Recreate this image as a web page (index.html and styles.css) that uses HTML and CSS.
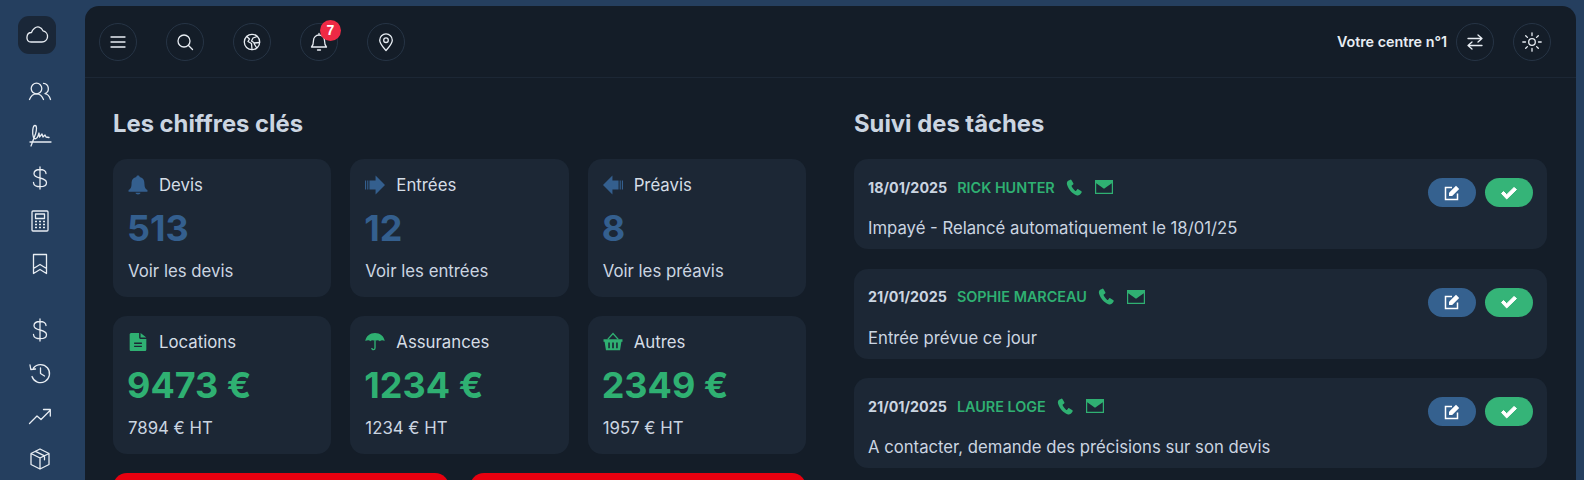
FILE: index.html
```html
<!DOCTYPE html>
<html lang="fr">
<head>
    <meta charset="UTF-8">
    <title>Tableau de bord</title>
    <link rel="stylesheet" href="styles.css">
</head>
<body>
    <!-- Sidebar -->
    <aside class="sidebar">
        <div class="logo">
            <svg class="ico" width="28" height="28" viewBox="0 0 28 28"><path d="M8 21h11a5.600 5.600 0 0 0 1-11.100C18.500 5.500 14 5 11.500 7.300 9.500 9 9 10 8.500 11.500 3 11.500 2 21 8 21Z"/></svg>
        </div>
        <nav class="side-group">
            <svg class="ico" width="26" height="26" viewBox="0 0 26 26"><circle cx="9.500" cy="9.500" r="5.300"/><path d="M2.500 20.500c1.300-3.400 3.800-5.600 7-5.600s5.700 2.200 7 5.600M16.500 4.400a5.300 5.300 0 0 1 1.500 10.200c2.800.4 4.500 2.500 5.500 5.900"/></svg>
            <svg class="ico" width="26" height="26" viewBox="0 0 26 26"><path d="M4 24 8.500 12C9.800 8 10 3.500 8 3.500 5.500 3.500 5 12 6.500 15.500c1 2 3.500 1.500 4.500-1.500l1-3 .5 4 2.500-3 1 3 2-2 1 2 3 .5M3 20h21"/></svg>
            <svg class="ico" width="26" height="26" viewBox="0 0 26 26"><path d="M13 2v22M19 8.500c0-2.500-2.500-4-6-4s-6 1.700-6 4.200 2.500 3.500 6 4.300 6.500 2 6.500 4.700-3 4-6.500 4-6.500-1.600-6.500-4.200"/></svg>
            <svg class="ico" width="26" height="26" viewBox="0 0 26 26"><rect x="5" y="3" width="16" height="20" rx="1"/><rect x="8.500" y="6" width="9" height="4.500"/><path class="dots" d="M8 13.500h2M12 13.500h2M16 13.500h2M8 16.500h2M12 16.500h2M16 16.500h2M8 19.500h2M12 19.500h2M16 19.500h2"/></svg>
            <svg class="ico" width="26" height="26" viewBox="0 0 26 26"><path d="M6.500 3.500h13v19L13 18.500l-6.500 4ZM6.500 17.500l6.500-4 6.500 4"/></svg>
        </nav>
        <nav class="side-group">
            <svg class="ico" width="26" height="26" viewBox="0 0 26 26"><path d="M13 2v22M19 8.500c0-2.500-2.500-4-6-4s-6 1.700-6 4.200 2.500 3.500 6 4.300 6.500 2 6.500 4.700-3 4-6.500 4-6.500-1.600-6.500-4.200"/></svg>
            <svg class="ico" width="26" height="26" viewBox="0 0 26 26"><path d="M6.500 8A9 9 0 1 1 5 16.500M3 5l.8 4.500 4.700-.5M13.500 8v5.500l4 2.500"/></svg>
            <svg class="ico" width="26" height="26" viewBox="0 0 26 26"><path d="M2.500 20.500 10 13l4 3.500 9-9M16.500 6.500h6.800v6.500"/></svg>
            <svg class="ico" width="26" height="26" viewBox="0 0 26 26"><path d="M13 3l9 4.500v11L13 23l-9-4.500v-11ZM4 7.500 13 12l9-4.500M13 12v11M8.500 5.300l9 4.500v4"/></svg>
        </nav>
    </aside>

    <div class="panel">
        <!-- Top bar -->
        <header class="topbar">
            <div class="top-left">
                <button class="round">
                    <svg class="ico" width="20" height="20" viewBox="0 0 20 20"><path d="M3 5h14M3 10h14M3 15h14"/></svg>
                </button>
                <button class="round">
                    <svg class="ico" width="20" height="20" viewBox="0 0 20 20"><circle cx="9" cy="9" r="6"/><path d="m13.500 13.500 4 4"/></svg>
                </button>
                <button class="round">
                    <svg class="ico" width="20" height="20" viewBox="0 0 20 20"><circle cx="10" cy="10" r="7.700"/><path d="M4.800 4.500 7.500 7 6 9.500l3.500 2 .5 6M15.200 4.500 11 6 9.500 9l3 2 5-.5M12 11.500l2.500 4"/></svg>
                </button>
                <button class="round">
                    <svg class="ico" width="20" height="20" viewBox="0 0 20 20"><path d="M2.500 15c1.500-1.500 2-3.500 2-6.500a5.500 5.500 0 0 1 11 0c0 3 .5 5 2 6.500ZM10 1.300V3M8.500 18h3"/></svg>
                    <span class="badge">7</span>
                </button>
                <button class="round">
                    <svg class="ico" width="20" height="20" viewBox="0 0 20 20"><path d="M10 18.500c-3-3.500-6.300-6.800-6.300-10.300a6.300 6.300 0 0 1 12.600 0c0 3.500-3.300 6.800-6.300 10.300Z"/><circle cx="10" cy="8.200" r="2.300"/></svg>
                </button>
            </div>
            <div class="top-right">
                <span class="center-name">Votre centre n°1</span>
                <button class="round">
                    <svg class="ico" width="20" height="20" viewBox="0 0 20 20"><path d="M3 6.500h14M13 3l4 3.500-4 3.500M17 13.500H3M7 10l-4 3.500L7 17"/></svg>
                </button>
                <button class="round sun">
                    <svg class="ico" width="20" height="20" viewBox="0 0 20 20"><circle cx="10" cy="10" r="3.300"/><path d="M10 .8v2.700M10 16.500v2.700M.8 10h2.700M16.500 10h2.700M3.700 3.700l1.700 1.700M14.600 14.600l1.700 1.700M3.700 16.300l1.700-1.700M14.600 5.400l1.700-1.700"/></svg>
                </button>
            </div>
        </header>

        <main class="content">
            <!-- Chiffres -->
            <section>
                <h2>Les chiffres clés</h2>
                <div class="stats">
                    <div class="stat blue">
                        <div class="stat-head">
                            <svg class="solid" viewBox="0 0 18 18"><path d="M9 .5c.8 0 1.400.5 1.500 1.200C14 2.500 14.800 5 14.800 8c0 3 1 4.500 2.700 5.500V15H.5v-1.500C2.200 12.500 3.200 11 3.200 8c0-3 .8-5.500 4.300-6.300C7.600 1 8.200.5 9 .5ZM6.800 16h4.400c0 .8-1 1.500-2.200 1.500S6.800 16.800 6.800 16Z"/></svg>
                            <span>Devis</span>
                        </div>
                        <div class="stat-value">513</div>
                        <div class="stat-sub">Voir les devis</div>
                    </div>
                    <div class="stat blue">
                        <div class="stat-head">
                            <svg class="solid" viewBox="0 0 18 18"><path d="M0 5h1v8H0ZM2 5h1v8H2ZM4 5h5.500V.5L18 9l-8.500 8.500V13H4Z"/></svg>
                            <span>Entrées</span>
                        </div>
                        <div class="stat-value">12</div>
                        <div class="stat-sub">Voir les entrées</div>
                    </div>
                    <div class="stat blue">
                        <div class="stat-head">
                            <svg class="solid" viewBox="0 0 18 18"><path d="M18 5h-1v8h1ZM16 5h-1v8h1ZM14 5H8.500V.5L0 9l8.500 8.500V13H14Z"/></svg>
                            <span>Préavis</span>
                        </div>
                        <div class="stat-value">8</div>
                        <div class="stat-sub">Voir les préavis</div>
                    </div>
                    <div class="stat green">
                        <div class="stat-head">
                            <svg class="solid" viewBox="0 0 18 18"><path fill-rule="evenodd" d="M1.500 2.200C1.500 1.500 2 .8 2.800.8H10V5c0 .7.500 1.200 1.200 1.200h5.300v9.500c0 .8-.6 1.500-1.400 1.500H2.800c-.8 0-1.300-.7-1.300-1.500ZM5.500 9.500v1.300h7V9.500ZM5.500 12.300v1.300h7v-1.300ZM11.300.8l5.200 4.200h-5.200Z"/></svg>
                            <span>Locations</span>
                        </div>
                        <div class="stat-value">9473 €</div>
                        <div class="stat-sub">7894 € HT</div>
                    </div>
                    <div class="stat green">
                        <div class="stat-head">
                            <svg class="solid" viewBox="0 0 19 18"><path d="M9.500.5c4.800 0 8.600 3 9.200 7.500-1.500-1-3.500-1-4.600.2-1-1.200-3.200-1.200-4.600-.3-1.400-.9-3.600-.9-4.600.3C4.300 7 2 7 .3 8 .9 3.500 4.700.5 9.500.5Z"/><path class="stem" d="M9.500 7.500v7.300c0 2-3 2-3 0"/></svg>
                            <span>Assurances</span>
                        </div>
                        <div class="stat-value">1234 €</div>
                        <div class="stat-sub">1234 € HT</div>
                    </div>
                    <div class="stat green">
                        <div class="stat-head">
                            <svg class="solid" viewBox="0 0 19 18"><path fill-rule="evenodd" d="M.5 6.500h18v2.300h-1l-1.300 8H2.800l-1.300-8h-1ZM5 9.500v5.500h1.500V9.500ZM8.700 9.500v5.500h1.600V9.500ZM12.500 9.500v5.500H14V9.500Z"/><path class="stem" d="M4.500 6.500 9.500 1l5 5.500"/></svg>
                            <span>Autres</span>
                        </div>
                        <div class="stat-value">2349 €</div>
                        <div class="stat-sub">1957 € HT</div>
                    </div>
                </div>
                <div class="alerts">
                    <div class="alert"></div>
                    <div class="alert"></div>
                </div>
            </section>

            <!-- Taches -->
            <section>
                <h2>Suivi des tâches</h2>
                <div class="tasks">
                    <div class="task">
                        <div class="task-main">
                            <div class="task-head">
                                <span class="task-date">18/01/2025</span>
                                <span class="task-name">RICK HUNTER</span>
                                <svg class="solid" viewBox="0 0 16 16"><path d="M4.200.6 2 1.700C.8 2.500.6 4 1 5.500c1.500 4.800 4.800 8.300 8.800 9.700 1.600.5 3 .1 3.900-1l1-1.600c.2-.4.100-.8-.2-1l-3-2c-.4-.2-.8-.1-1 .2l-1 1.300c-.2.200-.5.300-.8.100C7.200 10 5.800 8.400 5.200 6.700c-.1-.3 0-.6.300-.7l1.200-.8c.3-.2.400-.6.300-1L5.100 1C4.900.6 4.500.4 4.200.6Z"/></svg>
                                <svg class="mail" width="18" height="14" viewBox="0 0 18 14"><path d="M0 0h18v14H0Zm1.200 3.300v9.500h15.600V3.300L9 8.800Z" fill-rule="evenodd"/></svg>
                            </div>
                            <p class="task-text">Impayé - Relancé automatiquement le 18/01/25</p>
                        </div>
                        <div class="task-actions">
                            <button class="pill edit">
                                <svg width="16" height="16" viewBox="0 0 16 16"><path class="edit-box" d="M8 2.500H1.500v12h12V8.500"/><path class="edit-pen" d="M12 .8 15.200 4l-7 7H5V7.800Z"/></svg>
                            </button>
                            <button class="pill done">
                                <svg width="18" height="14" viewBox="0 0 18 14"><path d="M1.500 7.500 3.500 5.500l3.200 3.200L14 1.500l2.500 2-9.800 9.500Z"/></svg>
                            </button>
                        </div>
                    </div>
                    <div class="task">
                        <div class="task-main">
                            <div class="task-head">
                                <span class="task-date">21/01/2025</span>
                                <span class="task-name">SOPHIE MARCEAU</span>
                                <svg class="solid" viewBox="0 0 16 16"><path d="M4.200.6 2 1.700C.8 2.500.6 4 1 5.500c1.500 4.800 4.800 8.300 8.800 9.700 1.600.5 3 .1 3.900-1l1-1.600c.2-.4.100-.8-.2-1l-3-2c-.4-.2-.8-.1-1 .2l-1 1.300c-.2.200-.5.300-.8.100C7.200 10 5.800 8.400 5.200 6.700c-.1-.3 0-.6.300-.7l1.200-.8c.3-.2.400-.6.300-1L5.100 1C4.900.6 4.500.4 4.200.6Z"/></svg>
                                <svg class="mail" width="18" height="14" viewBox="0 0 18 14"><path d="M0 0h18v14H0Zm1.200 3.300v9.500h15.600V3.300L9 8.800Z" fill-rule="evenodd"/></svg>
                            </div>
                            <p class="task-text">Entrée prévue ce jour</p>
                        </div>
                        <div class="task-actions">
                            <button class="pill edit">
                                <svg width="16" height="16" viewBox="0 0 16 16"><path class="edit-box" d="M8 2.500H1.500v12h12V8.500"/><path class="edit-pen" d="M12 .8 15.200 4l-7 7H5V7.800Z"/></svg>
                            </button>
                            <button class="pill done">
                                <svg width="18" height="14" viewBox="0 0 18 14"><path d="M1.500 7.500 3.500 5.500l3.200 3.200L14 1.500l2.500 2-9.800 9.500Z"/></svg>
                            </button>
                        </div>
                    </div>
                    <div class="task">
                        <div class="task-main">
                            <div class="task-head">
                                <span class="task-date">21/01/2025</span>
                                <span class="task-name">LAURE LOGE</span>
                                <svg class="solid" viewBox="0 0 16 16"><path d="M4.200.6 2 1.700C.8 2.500.6 4 1 5.500c1.500 4.800 4.800 8.300 8.800 9.700 1.600.5 3 .1 3.900-1l1-1.600c.2-.4.100-.8-.2-1l-3-2c-.4-.2-.8-.1-1 .2l-1 1.300c-.2.200-.5.300-.8.100C7.200 10 5.800 8.400 5.200 6.700c-.1-.3 0-.6.300-.7l1.200-.8c.3-.2.400-.6.300-1L5.100 1C4.900.6 4.500.4 4.200.6Z"/></svg>
                                <svg class="mail" width="18" height="14" viewBox="0 0 18 14"><path d="M0 0h18v14H0Zm1.200 3.300v9.500h15.600V3.300L9 8.800Z" fill-rule="evenodd"/></svg>
                            </div>
                            <p class="task-text">A contacter, demande des précisions sur son devis</p>
                        </div>
                        <div class="task-actions">
                            <button class="pill edit">
                                <svg width="16" height="16" viewBox="0 0 16 16"><path class="edit-box" d="M8 2.500H1.500v12h12V8.500"/><path class="edit-pen" d="M12 .8 15.200 4l-7 7H5V7.800Z"/></svg>
                            </button>
                            <button class="pill done">
                                <svg width="18" height="14" viewBox="0 0 18 14"><path d="M1.500 7.500 3.500 5.500l3.200 3.200L14 1.500l2.500 2-9.800 9.500Z"/></svg>
                            </button>
                        </div>
                    </div>
                </div>
            </section>
        </main>
    </div>
</body>
</html>
```

FILE: styles.css
```css
/* General Reset */
* {
    margin: 0;
    padding: 0;
    box-sizing: border-box;
}

html, body {
    height: 480px;
    overflow: hidden;
}

body {
    display: flex;
    font-family: Inter, "Noto Sans", sans-serif;
    background-color: #253f5f;
    color: #cbd5e1;
    padding: 6px 8px 0 0;
}

/* Line icons */
.ico {
    fill: none;
    stroke: #e8edf3;
    stroke-width: 1.3;
    stroke-linecap: round;
    stroke-linejoin: round;
}

.ico .dots {
    stroke-width: 1.6;
    stroke-linecap: butt;
}

/* Sidebar */
.sidebar {
    width: 85px;
    flex-shrink: 0;
    display: flex;
    flex-direction: column;
    align-items: center;
    padding: 10px 6px 0 0;
}

.logo {
    width: 38px;
    height: 38px;
    flex-shrink: 0;
    margin-right: 5px;
    border-radius: 11px;
    background-color: #1a2738;
    display: flex;
    align-items: center;
    justify-content: center;
    margin-bottom: 25px;
}

.side-group {
    display: flex;
    flex-direction: column;
    flex-shrink: 0;
    align-items: center;
    gap: 17px;
    margin-bottom: 40px;
}

.side-group .ico {
    display: block;
    flex-shrink: 0;
}

/* Main panel */
.panel {
    flex: 1;
    background-color: #141d28;
    border-radius: 14px 14px 0 0;
    min-width: 0;
}

.topbar {
    height: 72px;
    display: flex;
    align-items: center;
    justify-content: space-between;
    padding: 0 25px 0 14px;
    border-bottom: 1px solid #1c2735;
}

.top-left {
    display: flex;
    gap: 29px;
}

.top-right {
    display: flex;
    align-items: center;
}

.center-name {
    font-size: 14.3px;
    font-weight: 600;
    color: #e8edf3;
    margin-right: 9px;
}

.round {
    position: relative;
    width: 38px;
    height: 38px;
    border-radius: 50%;
    border: 1px solid #263445;
    background: none;
    display: flex;
    align-items: center;
    justify-content: center;
}

.sun {
    margin-left: 19px;
}

.badge {
    position: absolute;
    top: -4px;
    right: -4px;
    width: 21px;
    height: 21px;
    border-radius: 50%;
    background-color: #ee2a45;
    color: #fff;
    font-size: 14px;
    font-weight: 700;
    line-height: 21px;
    text-align: center;
}

/* Content */
.content {
    display: grid;
    grid-template-columns: 1fr 1fr;
    gap: 48px;
    padding: 31px 29px 0 28px;
}

h2 {
    font-size: 23.8px;
    font-weight: 700;
    line-height: 30px;
    color: #cbd5e1;
    margin-bottom: 20px;
}

.stats {
    display: grid;
    grid-template-columns: repeat(3, 1fr);
    gap: 19px;
}

.stat {
    height: 138px;
    background-color: #1c2735;
    border-radius: 14px;
    padding: 15px 14px 15px 15px;
}

.stat-head {
    display: flex;
    align-items: center;
    gap: 12px;
    height: 22px;
    font-size: 16.8px;
    color: #d5dde6;
}

.stat-head .solid {
    width: 20px;
    height: 20px;
    flex-shrink: 0;
    margin-right: -1px;
}

.stat-value {
    font-size: 36px;
    font-weight: 700;
    line-height: 44px;
    margin: 10px 0 0 -1px;
}

.stat-sub {
    font-size: 16.8px;
    line-height: 20px;
    margin-top: 11px;
}

.blue .stat-value { color: #345f8e; }
.blue .solid { fill: #345f8e; }
.green .stat-value { color: #2fb072; }
.green .solid { fill: #2fb072; }
.stem {
    fill: none;
    stroke: #2fb072;
    stroke-width: 1.3;
}

/* Red buttons, cut by the window */
.alerts {
    display: grid;
    grid-template-columns: 1fr 1fr;
    gap: 21px;
    margin-top: 19px;
}

.alert {
    height: 50px;
    background-color: #e8000f;
    border-radius: 14px;
}

/* Tasks */
.tasks {
    display: flex;
    flex-direction: column;
    gap: 19.5px;
}

.task {
    height: 90px;
    background-color: #1c2735;
    border-radius: 14px;
    padding: 18px 14px 0;
    display: flex;
    justify-content: space-between;
}

.task-head {
    display: flex;
    align-items: center;
    height: 20px;
}

.task-date {
    font-size: 14.3px;
    font-weight: 700;
    color: #cbd5e1;
    margin-right: 10px;
}

.task-name {
    font-size: 14.4px;
    font-weight: 600;
    color: #2fb072;
    margin-right: 11px;
}

.task-head .solid {
    width: 17px;
    height: 17px;
    fill: #2fb072;
    margin-right: 12px;
}

.mail {
    fill: #2fb072;
}

.task-text {
    font-size: 16.7px;
    line-height: 20px;
    margin-top: 21px;
}

.task-actions {
    display: flex;
    gap: 9px;
    margin-top: 1px;
}

.pill {
    width: 48px;
    height: 29px;
    border: none;
    border-radius: 15px;
    display: flex;
    align-items: center;
    justify-content: center;
}

.edit { background-color: #35618f; }
.done { background-color: #35b478; }
.done svg {
    fill: #fff;
    stroke: #fff;
    stroke-width: 1;
    stroke-linejoin: round;
}
.edit-box {
    fill: none;
    stroke: #fff;
    stroke-width: 1.5;
}
.edit-pen { fill: #fff; }
```
